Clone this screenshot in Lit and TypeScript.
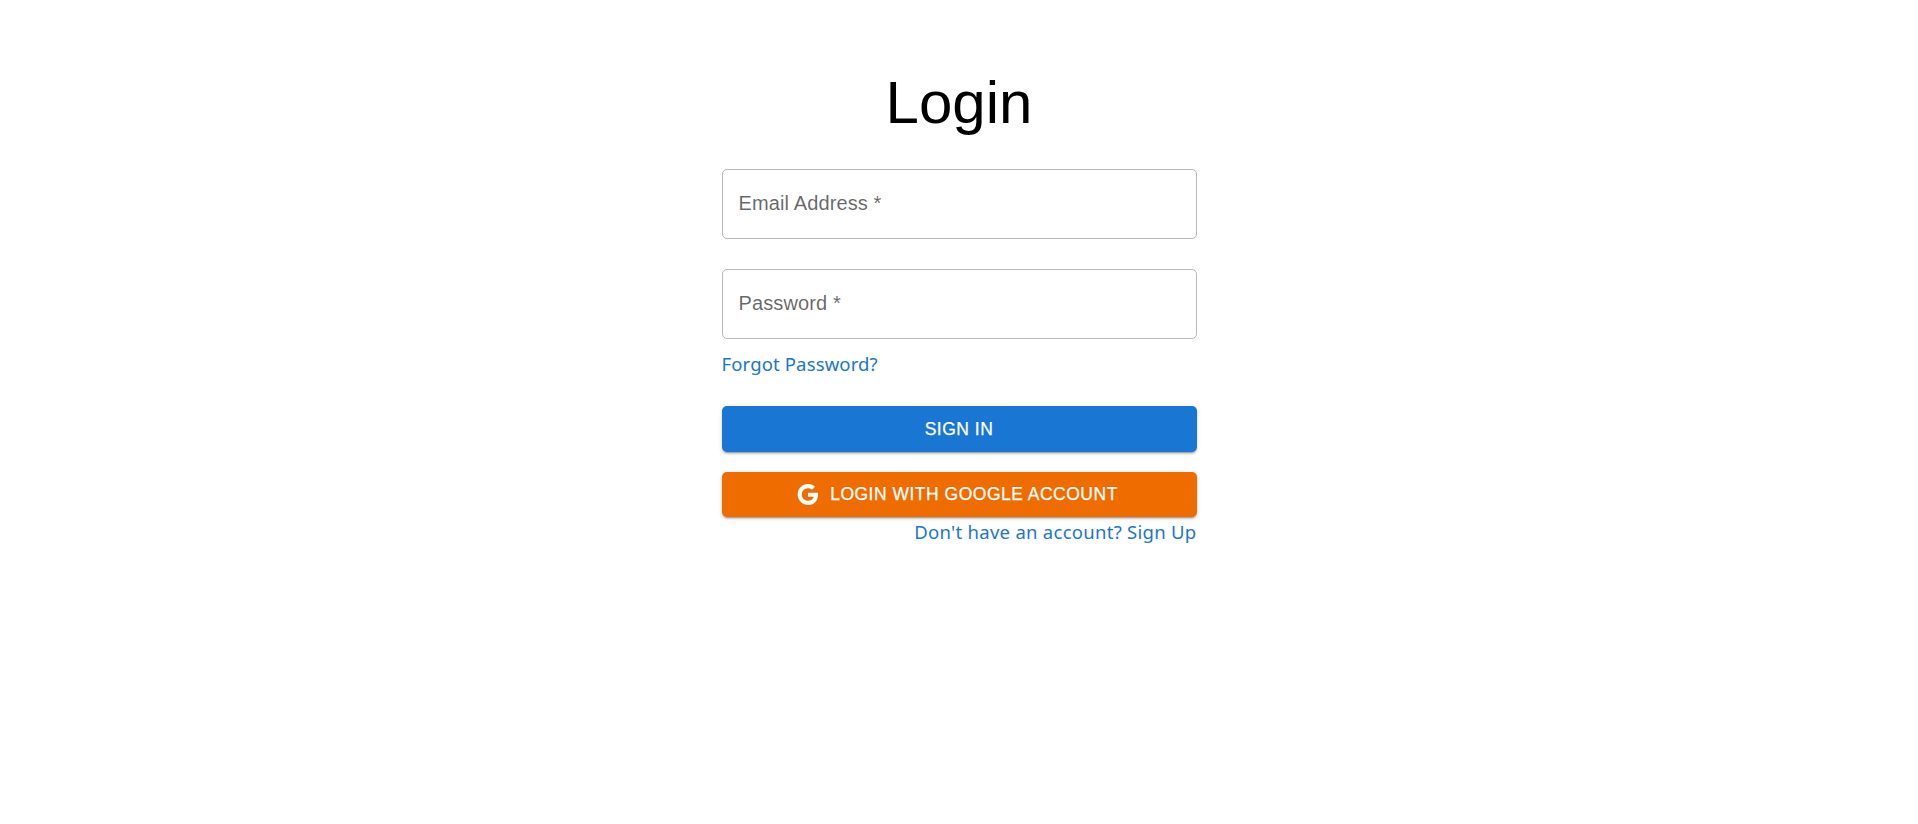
import { LitElement, html, css } from "lit";
import { customElement } from "lit/decorators.js";

@customElement("app-root")
export class AppRoot extends LitElement {
  static styles = css`
    :host {
      display: block;
      min-height: 824px;
      background: #fff;
      font-family: "Liberation Sans", Arial, sans-serif;
    }
    .page {
      width: 475px;
      margin: 0 auto;
      padding-top: 67px;
      display: flex;
      flex-direction: column;
    }
    h1 {
      margin: 0 0 30px;
      font-size: 60px;
      line-height: 72px;
      font-weight: 400;
      text-align: center;
      color: #000;
    }
    .field {
      height: 70px;
      box-sizing: border-box;
      border: 1px solid rgba(0, 0, 0, 0.27);
      border-radius: 5px;
      padding: 0 16px 2px;
      display: flex;
      align-items: center;
      font-size: 20px;
      letter-spacing: 0.12px;
      color: rgba(0, 0, 0, 0.6);
    }
    .field + .field {
      margin-top: 30px;
    }
    .link {
      font-family: "Noto Sans", "Open Sans", sans-serif;
      font-size: 18.5px;
      line-height: 24px;
      color: #1976d2;
      text-decoration: none;
    }
    .forgot {
      margin-top: 13px;
      align-self: flex-start;
      letter-spacing: 0.14px;
    }
    .btn {
      border: 0;
      border-radius: 5px;
      color: #fff;
      font-family: inherit;
      font-size: 17.5px;
      letter-spacing: 0.5px;
      -webkit-text-stroke: 0.25px #fff;
      text-transform: uppercase;
      display: flex;
      align-items: center;
      justify-content: center;
      padding: 0;
      box-shadow: 0 3px 1px -2px rgba(0, 0, 0, 0.2), 0 2px 2px 0 rgba(0, 0, 0, 0.14), 0 1px 5px 0 rgba(0, 0, 0, 0.12);
    }
    .signin {
      height: 46px;
      margin-top: 30px;
      background: #1976d2;
    }
    .google {
      height: 45px;
      margin-top: 20px;
      background: #ef6c00;
    }
    .google svg {
      width: 25px;
      height: 25px;
      margin: 0 10px 0 -5px;
      fill: #fff;
      flex: none;
    }
    .signup {
      align-self: flex-end;
      margin-top: 3px;
      letter-spacing: 0.28px;
    }
  `;

  render() {
    return html`
      <main class="page">
        <h1>Login</h1>
        <div class="field">Email Address *</div>
        <div class="field">Password *</div>
        <a class="link forgot" href="#">Forgot Password?</a>
        <button class="btn signin">Sign In</button>
        <button class="btn google">
          <svg viewBox="0 0 24 24" aria-hidden="true">
            <path d="M12.545 10.239v3.821h5.445c-.712 2.315-2.647 3.972-5.445 3.972-3.332 0-6.033-2.701-6.033-6.032s2.701-6.032 6.033-6.032c1.498 0 2.866.549 3.921 1.453l2.814-2.814C17.503 2.988 15.139 2 12.545 2 7.021 2 2.543 6.477 2.543 12s4.478 10 10.002 10c8.396 0 10.249-7.85 9.426-11.748l-9.426-.013z"></path>
          </svg>
          Login with Google Account
        </button>
        <a class="link signup" href="#">Don't have an account? Sign Up</a>
      </main>
    `;
  }
}
